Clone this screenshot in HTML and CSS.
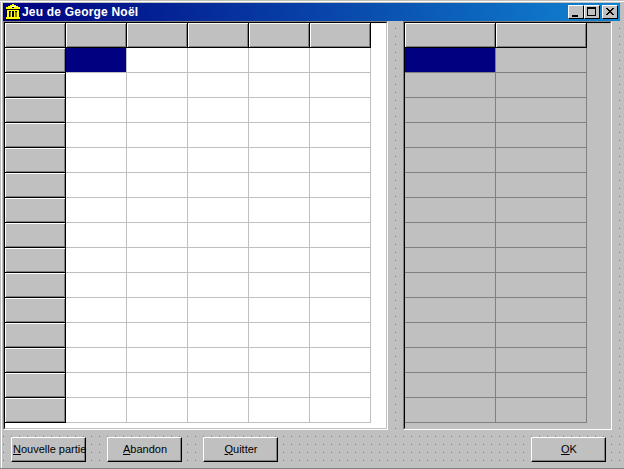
FILE: index.html
```html
<!DOCTYPE html>
<html lang="fr">
<head>
<meta charset="utf-8">
<title>Jeu de George Noël</title>
<link rel="stylesheet" href="styles.css">
</head>
<body>
<div class="win">
  <div class="title">
    <svg class="app-icon" width="16" height="16" viewBox="0 0 16 16" shape-rendering="crispEdges">
      <path fill="#ffff00" d="M7 0h2v1h2v1h2v1h2v2H1V3h2V2h2V1h2z"/>
      <path fill="#fff" d="M6 2h4v1H6z"/>
      <path fill="#000" d="M7 3h2v1H7zM1 5h14v1H1zM1 6h14v7H1z"/>
      <path fill="#ffff00" d="M2 6h12v1H2zM2 7h2v6H2zM6 7h1v6H6zM9 7h1v6H9zM12 7h2v6h-2zM1 13h14v2H1z"/>
      <path fill="#808000" d="M5 8h1v5H5zM10 8h2v5h-2z"/>
      <path fill="#000" d="M1 15h14v1H1z"/>
    </svg>
    <span class="title-text">Jeu de George Noël</span>
    <div class="ctrls">
      <span class="ctrl"><svg width="14" height="12" viewBox="0 0 14 12" shape-rendering="crispEdges"><path d="M3 9h6v2H3z"/></svg></span>
      <span class="ctrl"><svg width="14" height="12" viewBox="0 0 14 12" shape-rendering="crispEdges"><path d="M2 1h9v9H2zM3 3v6h7V3z" fill-rule="evenodd"/></svg></span>
      <span class="ctrl ctrl-close"><svg width="14" height="12" viewBox="0 0 14 12" shape-rendering="crispEdges"><path d="M3 2h2v1h1v1h2V3h1V2h2v1h-1v1H9v1H8v1h1v1h1v1h1v1H9V8H8V7H6v1H5v1H3V8h1V7h1V6h1V5H5V4H4V3H3z"/></svg></span>
    </div>
  </div>
  <div class="main">
    <div class="panel panel-a">
      <div class="inner inner-a">
        <div class="grid grid-a">
          <div class="h"></div><div class="h"></div><div class="h"></div><div class="h"></div><div class="h"></div><div class="h"></div>
          <div class="h"></div><div class="c sel"></div><div class="c"></div><div class="c"></div><div class="c"></div><div class="c"></div>
          <div class="h"></div><div class="c"></div><div class="c"></div><div class="c"></div><div class="c"></div><div class="c"></div>
          <div class="h"></div><div class="c"></div><div class="c"></div><div class="c"></div><div class="c"></div><div class="c"></div>
          <div class="h"></div><div class="c"></div><div class="c"></div><div class="c"></div><div class="c"></div><div class="c"></div>
          <div class="h"></div><div class="c"></div><div class="c"></div><div class="c"></div><div class="c"></div><div class="c"></div>
          <div class="h"></div><div class="c"></div><div class="c"></div><div class="c"></div><div class="c"></div><div class="c"></div>
          <div class="h"></div><div class="c"></div><div class="c"></div><div class="c"></div><div class="c"></div><div class="c"></div>
          <div class="h"></div><div class="c"></div><div class="c"></div><div class="c"></div><div class="c"></div><div class="c"></div>
          <div class="h"></div><div class="c"></div><div class="c"></div><div class="c"></div><div class="c"></div><div class="c"></div>
          <div class="h"></div><div class="c"></div><div class="c"></div><div class="c"></div><div class="c"></div><div class="c"></div>
          <div class="h"></div><div class="c"></div><div class="c"></div><div class="c"></div><div class="c"></div><div class="c"></div>
          <div class="h"></div><div class="c"></div><div class="c"></div><div class="c"></div><div class="c"></div><div class="c"></div>
          <div class="h"></div><div class="c"></div><div class="c"></div><div class="c"></div><div class="c"></div><div class="c"></div>
          <div class="h"></div><div class="c"></div><div class="c"></div><div class="c"></div><div class="c"></div><div class="c"></div>
          <div class="h"></div><div class="c"></div><div class="c"></div><div class="c"></div><div class="c"></div><div class="c"></div>
        </div>
      </div>
    </div>
    <div class="panel panel-b">
      <div class="inner">
        <div class="grid grid-b">
          <div class="h"></div><div class="h"></div>
          <div class="d sel"></div><div class="d"></div>
          <div class="d"></div><div class="d"></div>
          <div class="d"></div><div class="d"></div>
          <div class="d"></div><div class="d"></div>
          <div class="d"></div><div class="d"></div>
          <div class="d"></div><div class="d"></div>
          <div class="d"></div><div class="d"></div>
          <div class="d"></div><div class="d"></div>
          <div class="d"></div><div class="d"></div>
          <div class="d"></div><div class="d"></div>
          <div class="d"></div><div class="d"></div>
          <div class="d"></div><div class="d"></div>
          <div class="d"></div><div class="d"></div>
          <div class="d"></div><div class="d"></div>
          <div class="d"></div><div class="d"></div>
        </div>
      </div>
    </div>
  </div>
  <div class="actions">
    <button class="btn" type="button"><u>N</u>ouvelle partie</button>
    <button class="btn" type="button"><u>A</u>bandon</button>
    <button class="btn" type="button"><u>Q</u>uitter</button>
    <button class="btn btn-ok" type="button"><u>O</u>K</button>
  </div>
</div>
</body>
</html>
```
FILE: styles.css
```css
* { box-sizing: border-box; }
html, body { margin: 0; padding: 0; }
body { width: 624px; height: 469px; overflow: hidden; background: #c0c0c0; }

.win {
  width: 624px;
  height: 469px;
  padding: 3px 4px 0 3px;
  border-bottom: 1px solid #808080;
  display: flex;
  flex-direction: column;
  background-color: #c0c0c0;
  background-image: conic-gradient(at 1px 1px, #c0c0c0 75%, #808080 0);
  background-size: 8px 8px;
  background-position: 3px 4px;
  box-shadow: inset 0 1px 0 #c0c0c0, inset 0 2px 0 #fff, inset 1px 0 0 #c0c0c0, inset 2px 0 0 #fff;
  font-family: "Liberation Sans", Arial, sans-serif;
}

.title {
  height: 18px;
  flex: none;
  display: flex;
  align-items: center;
  padding: 0 2px;
  background: linear-gradient(to right, #000080, #1084d0);
}
.app-icon { flex: none; margin-right: 1px; }
.title-text {
  color: #fff;
  font-weight: bold;
  font-size: 12px;
  letter-spacing: 0.2px;
  white-space: nowrap;
}
.ctrls { margin-left: auto; display: flex; }
.ctrl {
  width: 16px;
  height: 14px;
  display: block;
  background: #c0c0c0;
  border-top: 1px solid #fff;
  border-left: 1px solid #fff;
  border-right: 1px solid #000;
  border-bottom: 1px solid #000;
}
.ctrl svg { display: block; }
.ctrl-close { margin-left: 2px; }

.main { display: flex; flex: none; align-items: flex-start; }
.panel {
  height: 409px;
  border-top: 1px solid #808080;
  border-left: 1px solid #808080;
  border-right: 1px solid #fff;
  border-bottom: 1px solid #fff;
}
.panel-a { width: 385px; }
.panel-b { width: 209px; margin-left: 15px; }
.inner {
  height: 100%;
  background: #c0c0c0;
  border-top: 1px solid #000;
  border-left: 1px solid #000;
  border-right: 1px solid #c0c0c0;
  border-bottom: 1px solid #c0c0c0;
}
.inner-a { background: #fff; }

.grid { display: grid; grid-auto-rows: 25px; }
.grid-a { grid-template-columns: repeat(6, 61px); }
.grid-b { grid-template-columns: repeat(2, 91px); }

.h {
  background: #c0c0c0;
  border-right: 1px solid #000;
  border-bottom: 1px solid #000;
  box-shadow: inset 1px 1px 0 #fff, inset -1px -1px 0 #808080;
}
.c { border-right: 1px solid #c0c0c0; border-bottom: 1px solid #c0c0c0; }
.d { border-right: 1px solid #808080; border-bottom: 1px solid #808080; }
.sel { background: #000080; }

.actions {
  display: flex;
  gap: 21px;
  margin-top: 7px;
  padding: 0 14px 0 8px;
}
.btn {
  width: 75px;
  height: 25px;
  padding: 0 0 2px 1px;
  flex: none;
  background: #c0c0c0;
  color: #000;
  font-family: "Liberation Sans", Arial, sans-serif;
  font-size: 11px;
  white-space: nowrap;
  border-top: 1px solid #fff;
  border-left: 1px solid #fff;
  border-right: 1px solid #000;
  border-bottom: 1px solid #000;
  box-shadow: inset -1px -1px 0 #808080;
  border-radius: 0;
}
.btn-ok { margin-left: auto; }
```
